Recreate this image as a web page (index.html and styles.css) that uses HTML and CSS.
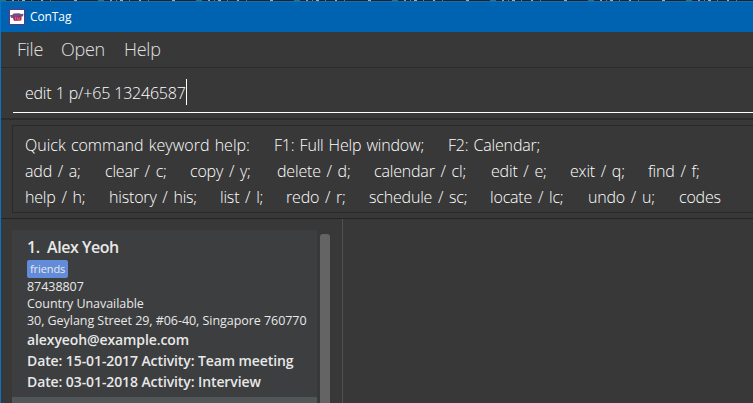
FILE: index.html
```html
<!DOCTYPE html>
<html lang="en">
<head>
<meta charset="utf-8">
<title>ConTag</title>
<link rel="stylesheet" href="styles.css">
</head>
<body>
<div class="backdrop"></div>
<div class="window">
  <header class="titlebar">
    <svg class="logo" viewBox="0 0 16 16" aria-hidden="true">
      <rect x=".5" y=".5" width="15" height="15" fill="#fff" stroke="#65347e"/>
      <path d="M1 6.2 3.5 5.7 4.5 4.5 10 4.2 12 5 14.5 4.8 14 7.5 12.5 7.2 12.3 11.5 4.8 11.8 4 9 2 8.7Z" fill="#70507f"/>
      <path d="M4.7 8 12.3 7.3 12.1 11.3 5.2 11.6Z" fill="#b91f56"/>
      <path d="M5.8 8.8h1.6M6.6 8.8v2M8.2 10.6l.6-2 .6 2M10.4 8.5v2h1" fill="none" stroke="#e98bad" stroke-width=".6"/>
    </svg>
    <span class="app-name">ConTag</span>
  </header>
  <nav class="menu"><span>File</span><span>Open</span><span>Help</span></nav>
  <section class="command"><div class="field"><span class="entry">edit 1 p/+65 13246587</span><i class="caret"></i></div></section>
  <section class="help">
    <div class="help-box">
      <div class="row row-a"><span>Quick command keyword help:</span><span>F1: Full Help window;</span><span>F2: Calendar;</span></div>
      <div class="row row-b"><span>add / a;</span><span>clear / c;</span><span>copy / y;</span><span>delete / d;</span><span>calendar / cl;</span><span>edit / e;</span><span>exit / q;</span><span>find / f;</span></div>
      <div class="row row-c"><span>help / h;</span><span>history / his;</span><span>list / l;</span><span>redo / r;</span><span>schedule / sc;</span><span>locate / lc;</span><span>undo / u;</span><span>codes</span></div>
    </div>
  </section>
  <main class="content">
    <div class="people">
      <div class="list">
        <article class="card">
          <h2 class="name"><span>1.</span><span>Alex Yeoh</span></h2>
          <span class="tag">friends</span>
          <p class="small phone">87438807</p>
          <p class="small country">Country Unavailable</p>
          <p class="small address">30, Geylang Street 29, #06-40, Singapore 760770</p>
          <p class="strong email">alexyeoh@example.com</p>
          <p class="strong meeting">Date: 15-01-2017 Activity: Team meeting</p>
          <p class="strong interview">Date: 03-01-2018 Activity: Interview</p>
        </article>
        <div class="next-card"></div>
      </div>
      <div class="scroll-thumb"></div>
    </div>
  </main>
</div>
</body>
</html>
```
FILE: styles.css
```css
* { box-sizing: border-box; }
body { margin: 0; width: 753px; height: 403px; overflow: hidden; background: #383838; font-family: "Open Sans", "Noto Sans", sans-serif; color: #e8e8e8; }
.backdrop { height: 1px; background: repeating-linear-gradient(90deg, #28747a 0 6px, #222 6px 12px, #999 12px 14px, #222 14px 18px, #a97335 18px 19px, #222 19px 22px, #aaa 22px 25px, #222 25px 31px, #5d8a72 31px 32px, #222 32px 41px, #aaa 41px 43px, #222 43px 50px, #a46b45 50px 51px, #222 51px 74px, #aaa 74px 77px, #222 77px 98px); }
.window { height: 402px; display: flex; flex-direction: column; border-left: 1px solid #0873c7; }
.titlebar { height: 31px; flex: none; display: flex; align-items: flex-start; padding: 7px 0 0 8px; background: #0063b1; border-top: 1px solid #126eb8; }
.logo { width: 16px; height: 16px; }
.app-name { margin: -1px 0 0 5px; font-size: 12px; line-height: 18px; letter-spacing: -.1px; color: #fff; }
.menu { height: 36px; flex: none; display: flex; padding: 5px 0 0 16px; border-bottom: 1px solid #2b2b2b; font-size: 18px; font-weight: 300; line-height: 25px; letter-spacing: -.25px; color: #e0e0e0; }
.menu span:nth-child(1) { width: 44px; }
.menu span:nth-child(2) { width: 63px; }
.command { height: 52px; flex: none; padding: 11px 0 0 12px; border-bottom: 2px solid #2b2b2b; }
.field { height: 34px; display: flex; padding-left: 12px; border-bottom: 1px solid #fff; }
.entry { width: 161px; padding-top: 1px; white-space: nowrap; font-size: 16px; font-weight: 300; line-height: 26px; letter-spacing: -.22px; word-spacing: .3px; color: #fff; }
.caret { width: 1px; height: 26px; background: #fff; }
.help { height: 99px; flex: none; padding: 5px 0 0 11px; border-bottom: 1px solid #252525; }
.help-box { height: 88px; border: 1px solid #292929; border-right: 0; padding: 6px 0 0 12px; font-size: 16px; font-weight: 300; line-height: 26px; letter-spacing: -.18px; word-spacing: 1.8px; color: #fff; }
.row { display: grid; white-space: nowrap; }
.row-a { grid-template-columns: 249px 174px 100px; word-spacing: 1.1px; }
.row-a span:first-child { letter-spacing: 0; }
.row-b { grid-template-columns: 80px 85px 87px 97px 117px 79px 78px 60px; }
.row-c { grid-template-columns: 84px 111px 66px 83px 121px 98px 91px 50px; }
.content { flex: 1; min-height: 0; }
.people { width: 342px; height: 100%; display: flex; border-right: 1px solid #515151; padding: 11px 0 0 11px; }
.list { width: 305px; }
.card { height: 167px; padding: 6px 0 0 15px; background: #3c3e3f; display: flex; flex-direction: column; align-items: flex-start; white-space: nowrap; }
.name { display: flex; margin: 0; font-size: 16px; font-weight: 600; line-height: 22px; letter-spacing: -.45px; }
.name span:first-child { width: 20px; }
.tag { margin-top: 2px; width: 41px; height: 18px; padding-left: 3px; border-radius: 2px; background: #628bd9; font-size: 11px; line-height: 17px; letter-spacing: -.1px; }
.small { margin: 0; height: 17px; font-size: 12.5px; line-height: 17px; letter-spacing: -.05px; }
.strong { margin: 0; font-size: 14px; font-weight: 600; line-height: 21px; letter-spacing: -.1px; }
.email { margin-top: 1px; line-height: 20px; }
.next-card { height: 6px; background: #515658; }
.scroll-thumb { width: 10px; margin: 4px 0 0 3px; border-radius: 3px 3px 0 0; background: #646464; }
```
